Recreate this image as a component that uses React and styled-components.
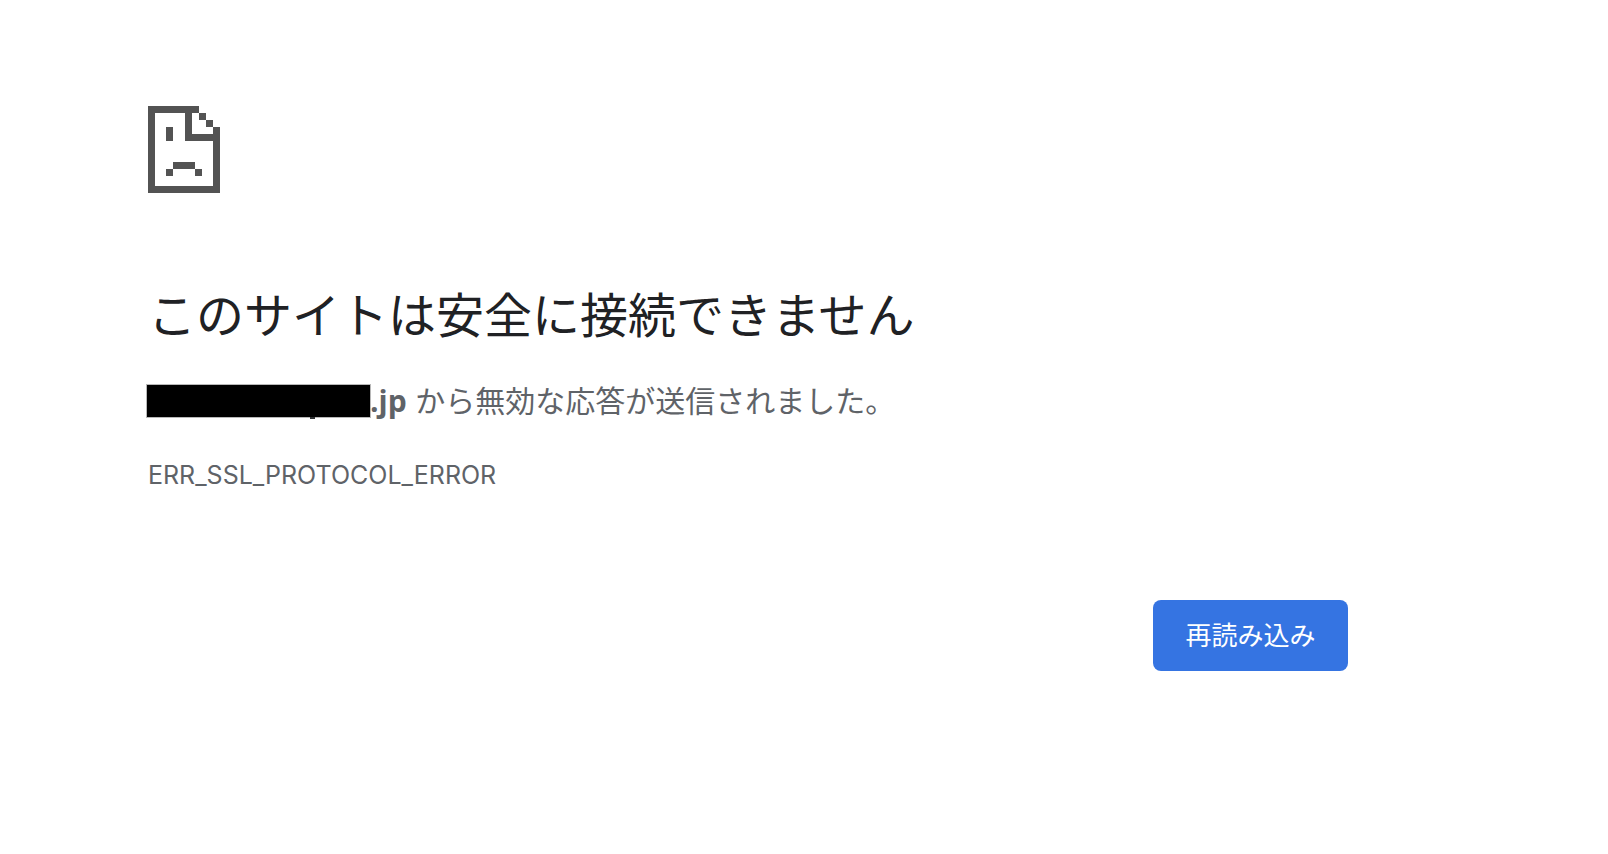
import React from "react";
import styled, { createGlobalStyle } from "styled-components";

const GlobalStyle = createGlobalStyle`
  body {
    margin: 0;
    background: #ffffff;
    color: #5f6368;
    font-family: Inter, "Noto Sans CJK JP", sans-serif;
  }
`;

const Page = styled.main`
  max-width: 1200px;
  padding: 106px 148px 64px;
`;

const SadPage = styled.svg`
  display: block;
  width: 72px;
  height: 87px;
  fill: #535353;
`;

const Title = styled.h1`
  margin: 89px 0 0;
  color: #202124;
  font-size: 48px;
  font-weight: 400;
  line-height: 68px;
`;

const Summary = styled.p`
  display: flex;
  align-items: center;
  flex-wrap: wrap;
  margin: 29px 0 0;
  font-size: 30px;
  line-height: 44px;
  white-space: pre-wrap;
`;

const Host = styled.strong`
  display: flex;
  align-items: center;
  font-family: "Open Sans", sans-serif;
  font-weight: 700;
`;

const Redaction = styled.span`
  position: relative;
  box-sizing: border-box;
  width: 225px;
  height: 34px;
  margin-left: -2px;
  margin-right: -1px;
  border: 1px solid #b8b8b8;
  background: #000000;

  &::after {
    content: "";
    position: absolute;
    top: 32px;
    left: 163px;
    width: 5px;
    height: 2px;
    background: #303234;
  }
`;

const ErrorCode = styled.div`
  margin-top: 34px;
  font-size: 25px;
  line-height: 36px;
`;

const Actions = styled.div`
  display: flex;
  justify-content: flex-end;
  margin-top: 107px;
`;

const ReloadButton = styled.button`
  min-width: 195px;
  height: 71px;
  padding: 0 32px 4px;
  border: 0;
  border-radius: 8px;
  background: #3574e2;
  color: #ffffff;
  font-family: "Noto Sans CJK JP", sans-serif;
  font-size: 26px;
  line-height: 38px;
  cursor: pointer;
`;

export default function App() {
  return (
    <>
      <GlobalStyle />
      <Page>
        <SadPage viewBox="0 0 72 87" shapeRendering="crispEdges" aria-hidden="true">
          <path d="M0 0H51V7H44V28H65V21H72V87H0ZM7 7V80H65V35H37V7Z" fillRule="evenodd" />
          <path d="M51 7h7v7h-7zM58 14h7v7h-7z" />
          <path d="M18 21h7v14h-7zM25 56h22v7h-22zM18 63h7v7h-7zM47 63h7v7h-7z" />
        </SadPage>
        <Title>このサイトは安全に接続できません</Title>
        <Summary>
          <Host>
            <Redaction />
            .jp
          </Host>
          <span> から無効な応答が送信されました。</span>
        </Summary>
        <ErrorCode>ERR_SSL_PROTOCOL_ERROR</ErrorCode>
        <Actions>
          <ReloadButton type="button">再読み込み</ReloadButton>
        </Actions>
      </Page>
    </>
  );
}
